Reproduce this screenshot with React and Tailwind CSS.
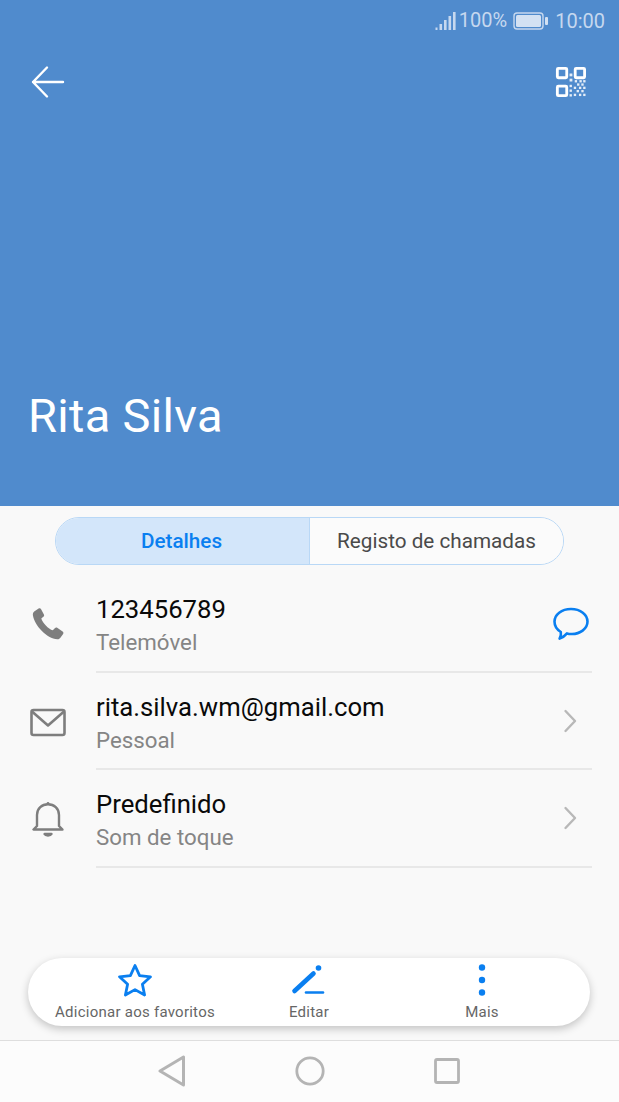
export default function App() {
  const Row = ({ icon, title, sub, right, h, textMt }) => (
    <div className={`flex ${h}`}>
      <div className="w-[96px] flex items-center justify-center pr-[1px] shrink-0">{icon}</div>
      <div className="flex-1 mr-[27px] border-b-2 border-[#e8e8e8] flex items-center justify-between">
        <div className={`flex flex-col ${textMt}`}>
          <div className="text-[25.7px] leading-[33px] text-[#0a0a0a]">{title}</div>
          <div className="text-[22.3px] leading-[33px] text-[#858585]">{sub}</div>
        </div>
        {right}
      </div>
    </div>
  );
  const Chevron = () => (
    <svg width="16" height="24" viewBox="0 0 16 24" className="mr-[14px]" fill="none" stroke="#b8b8b8" strokeWidth="2.4" strokeLinecap="round" strokeLinejoin="round">
      <path d="M3.5 2 L13 12 L3.5 22" />
    </svg>
  );
  return (
    <div className="w-[619px] h-[1102px] flex flex-col overflow-hidden bg-[#f9f9f9] font-['Roboto',sans-serif]">
      <header className="h-[506px] shrink-0 bg-[#508bcd] flex flex-col text-white">
        <div className="h-[42px] flex items-center justify-end pr-[14px] text-[20px] text-[#c6d8ef]">
          <svg width="21" height="20" viewBox="0 0 21 20" fill="#c6d8ef" className="mr-[3px] mb-[1px]">
            <rect x="0.5" y="16.5" width="2" height="2.5" />
            <rect x="4.5" y="13" width="2.6" height="6" />
            <rect x="9" y="9" width="2.6" height="10" />
            <rect x="13.5" y="5" width="2.6" height="14" />
            <rect x="18" y="1" width="2.6" height="18" />
          </svg>
          <span className="leading-none mb-[2px]">100%</span>
          <svg width="35" height="18" viewBox="0 0 35 18" fill="none" className="ml-[6px] mr-[7px]">
            <rect x="1" y="1" width="29" height="16" rx="3" stroke="#c6d8ef" strokeWidth="1.4" />
            <rect x="3" y="3" width="25" height="12" rx="1.5" fill="#d3e1f3" />
            <rect x="32" y="5" width="3" height="8" rx="1" fill="#d3e1f3" />
          </svg>
          <span className="leading-none">10:00</span>
        </div>
        <div className="flex justify-between items-start pl-[30px] pr-[33px] mt-[22px]">
          <svg width="36" height="36" viewBox="0 0 36 36" fill="none" stroke="white" strokeWidth="2.4" strokeLinecap="round" strokeLinejoin="round">
            <path d="M3 18 H33 M17 3.5 L3 18 L17 32.5" />
          </svg>
          <svg width="31" height="31" viewBox="0 0 33 33" fill="none" className="mt-[2px]">
            <g stroke="white" strokeWidth="3">
              <rect x="2.5" y="2.5" width="10" height="10" rx="1" />
              <rect x="21.5" y="2.5" width="10" height="10" rx="1" />
              <rect x="2.5" y="21.5" width="10" height="10" rx="1" />
            </g>
            <g fill="white" opacity="0.85">
              <rect x="15.5" y="8" width="3" height="3" />
              <rect x="15.5" y="13.5" width="3" height="3" />
              <rect x="21" y="15" width="2.5" height="2.5" />
              <rect x="26" y="15" width="2.5" height="2.5" />
              <rect x="30" y="15" width="2.5" height="2.5" />
              <rect x="15.5" y="20" width="2.5" height="2.5" />
              <rect x="23.5" y="18.5" width="2.5" height="2.5" />
              <rect x="28" y="18.5" width="2.5" height="2.5" />
              <rect x="20" y="22" width="2.5" height="2.5" />
              <rect x="25.5" y="22" width="2.5" height="2.5" />
              <rect x="30" y="22" width="2.5" height="2.5" />
              <rect x="15.5" y="25" width="2.5" height="2.5" />
              <rect x="23" y="25.5" width="2.5" height="2.5" />
              <rect x="28" y="25.5" width="2.5" height="2.5" />
              <rect x="15.5" y="30" width="2.5" height="2.5" />
              <rect x="20" y="29.5" width="2.5" height="2.5" />
              <rect x="25.5" y="29.5" width="2.5" height="2.5" />
              <rect x="30" y="29.5" width="2.5" height="2.5" />
            </g>
          </svg>
        </div>
        <div className="mt-auto mb-[60px] pl-[28px] text-[47px] leading-[60px] tracking-[0.3px]">Rita Silva</div>
      </header>

      <div className="mt-[11px] mx-[55px] h-[48px] flex rounded-full border border-[#b9d8f6] overflow-hidden text-[20.7px] shrink-0">
        <div className="w-[254px] bg-[#d3e6fa] border-r border-[#b9d8f6] flex items-center justify-center font-medium text-[#0a7ff0] pt-[1px] pr-[2px]">Detalhes</div>
        <div className="flex-1 bg-[#fbfbfb] flex items-center justify-center text-[#4a4a4a] pt-[1px]">Registo de chamadas</div>
      </div>

      <div className="flex flex-col">
        <Row
          h="h-[108px]"
          textMt="mt-[16px]"
          title="123456789"
          sub="Telemóvel"
          icon={
            <svg width="32" height="32" viewBox="0 0 32 32" fill="#7e7e7e" className="mt-[10px]">
              <path d="M2.2 3.6 L6.6 0.6 C7.6 0 8.6 0.3 9.1 1.2 L11.9 6.4 C12.4 7.3 12.1 8.2 11.3 8.8 L9.3 10.4 C10.6 14.6 16.4 21 20.8 22.3 L22.8 20.2 C23.5 19.5 24.4 19.3 25.2 19.8 L30.6 23.4 C31.5 24 31.7 25 31.1 25.9 L28.4 29.8 C27.8 30.7 26.7 31.4 25.4 31.3 C14.6 30.4 2.6 17.6 0.9 7.2 C0.7 5.8 1.2 4.4 2.2 3.6 Z" />
            </svg>
          }
          right={
            <svg width="36" height="34" viewBox="0 0 36 34" fill="none" stroke="#0a7ff0" strokeWidth="2.6" strokeLinejoin="round" className="mr-[3px] mt-[11px]">
              <path d="M18 2 C27.5 2 34.5 7.6 34.5 14.6 C34.5 21.8 27 27.4 18 27 C16.6 27 15 26.7 14 26.4 C12.2 28.6 9.4 30.6 6.6 31.6 C7.8 29.4 8.2 27 7.8 25 C3.8 22.6 1.5 19 1.5 14.6 C1.5 7.6 8.5 2 18 2 Z" />
            </svg>
          }
        />
        <Row
          h="h-[97px]"
          textMt="mt-[6px]"
          title="rita.silva.wm@gmail.com"
          sub="Pessoal"
          icon={
            <svg width="36" height="30" viewBox="0 0 36 30" fill="none" stroke="#7e7e7e" strokeWidth="2.6" strokeLinejoin="round" className="mt-[2px]">
              <rect x="1.5" y="2" width="33" height="25" rx="2" />
              <path d="M2 3.5 L18 17.5 L34 3.5" />
            </svg>
          }
          right={<Chevron />}
        />
        <Row
          h="h-[98px]"
          textMt="mt-[6px]"
          title="Predefinido"
          sub="Som de toque"
          icon={
            <svg width="32" height="36" viewBox="0 0 32 36" fill="none" stroke="#7e7e7e" strokeWidth="2.4" strokeLinecap="round" strokeLinejoin="round">
              <path d="M1.5 28.5 H30.5 L27 25 V14 C27 7.5 22 3.2 16 3.2 C10 3.2 5 7.5 5 14 V25 Z" />
              <circle cx="16" cy="2.5" r="1.4" fill="#7e7e7e" stroke="none" />
              <path d="M12.5 33 H19.5 C18.5 35 13.5 35 12.5 33 Z" fill="#7e7e7e" />
            </svg>
          }
          right={<Chevron />}
        />
      </div>

      <div className="mt-auto mx-[28px] h-[68px] shrink-0 w-[562px] px-[20px] rounded-[34px] bg-white shadow-[0_3px_8px_rgba(0,0,0,0.22)] grid grid-cols-3 text-[15px] leading-[20px] text-[#666666] tracking-[0.25px]">
        <div className="flex flex-col items-center pt-[5px]">
          <svg width="36" height="34" viewBox="0 0 36 34" fill="none" stroke="#0a7ff0" strokeWidth="2.8" strokeLinejoin="round">
            <path d="M18 2.5 L22.6 12.6 L33.5 13.8 L25.4 21.3 L27.6 32 L18 26.6 L8.4 32 L10.6 21.3 L2.5 13.8 L13.4 12.6 Z" />
          </svg>
          <span className="mt-[5px] whitespace-nowrap">Adicionar aos favoritos</span>
        </div>
        <div className="flex flex-col items-center pt-[5px]">
          <svg width="36" height="34" viewBox="0 0 36 34" fill="none" stroke="#0a7ff0" strokeLinecap="round">
            <path d="M3.5 28 L22.5 10.5" strokeWidth="4.6" />
            <circle cx="27.5" cy="5" r="2.8" fill="#0a7ff0" stroke="none" />
            <path d="M15 29.5 H32" strokeWidth="2.6" />
          </svg>
          <span className="mt-[5px]">Editar</span>
        </div>
        <div className="flex flex-col items-center pt-[5px] pr-[2px]">
          <svg width="12" height="34" viewBox="0 0 12 34" fill="#0a7ff0">
            <circle cx="6" cy="4.5" r="3.2" />
            <circle cx="6" cy="17" r="3.2" />
            <circle cx="6" cy="29.5" r="3.2" />
          </svg>
          <span className="mt-[5px]">Mais</span>
        </div>
      </div>

      <nav className="mt-[14px] h-[62px] shrink-0 bg-[#fcfcfc] border-t border-[#dedede] flex items-center">
        <div className="ml-[158px] flex items-center pb-[1px]">
          <svg width="28" height="32" viewBox="0 0 28 32" fill="none" stroke="#b4b4b4" strokeWidth="3" strokeLinejoin="round">
            <path d="M25.5 2 V30 L2 16 Z" />
          </svg>
          <svg width="30" height="30" viewBox="0 0 30 30" fill="none" stroke="#b4b4b4" strokeWidth="2.8" className="ml-[109px]">
            <circle cx="15" cy="15" r="13.2" />
          </svg>
          <svg width="26" height="26" viewBox="0 0 26 26" fill="none" stroke="#b4b4b4" strokeWidth="2.8" className="ml-[109px]">
            <rect x="1.5" y="1.5" width="23" height="23" rx="1.5" />
          </svg>
        </div>
      </nav>
    </div>
  );
}
